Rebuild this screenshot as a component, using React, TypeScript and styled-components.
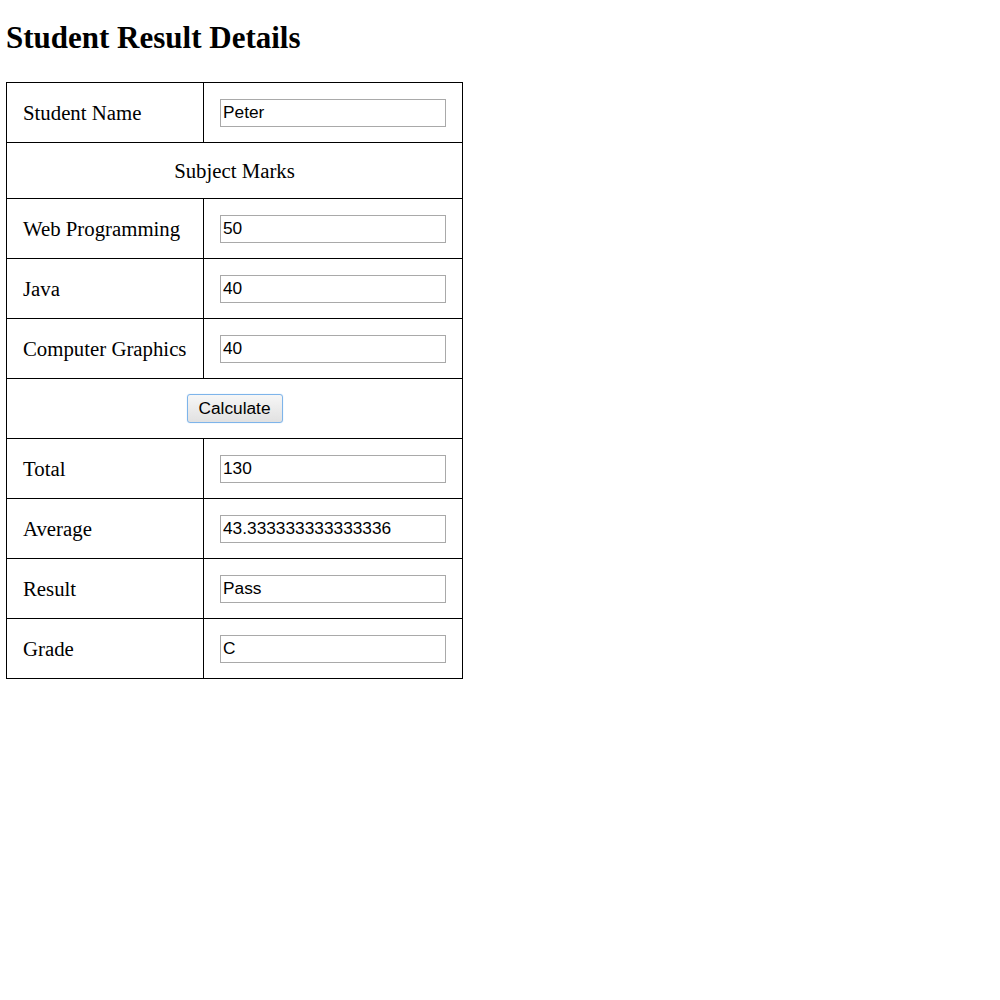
import React from "react";
import styled, { createGlobalStyle } from "styled-components";

const Global = createGlobalStyle`
  html, body { margin: 0; padding: 0; background: #fff; }
  body { font-family: "Liberation Serif", "Times New Roman", serif; color: #000; }
`;

const Page = styled.div`
  padding: 20px 0 0 6px;
`;

const Title = styled.h2`
  margin: 0 0 26px 0;
  font-size: 31px;
  line-height: 36px;
  font-weight: bold;
`;

const Table = styled.table`
  border-collapse: collapse;
  table-layout: fixed;
  width: 456px;
  border: 1px solid #000;
`;

const Cell = styled.td<{ $h?: number; $center?: boolean }>`
  border: 1px solid #000;
  height: ${(p) => p.$h ?? 60}px;
  padding: 0 0 0 16px;
  font-size: 20.8px;
  text-align: ${(p) => (p.$center ? "center" : "left")};
  vertical-align: middle;
  box-sizing: border-box;
  ${(p) => p.$center && "padding: 0;"}
`;

const Field = styled.input`
  box-sizing: border-box;
  width: 226px;
  height: 28px;
  margin: 0;
  padding: 0 2px;
  border: 1px solid #a9a9a9;
  font-family: "Liberation Sans", Arial, sans-serif;
  font-size: 17.3px;
  color: #000;
  background: #fff;
  display: block;
  outline: none;
`;

const Button = styled.button`
  box-sizing: border-box;
  width: 96px;
  height: 29px;
  margin: 0;
  padding: 0;
  border: 1px solid #7eb4ea;
  border-radius: 3px;
  background: linear-gradient(#f6f6f6, #e1e1e1);
  font-family: "Liberation Sans", Arial, sans-serif;
  font-size: 17.3px;
  color: #000;
  box-shadow: 0 0 1px #9cc6f0;
`;

const rows1 = [{ label: "Student Name", value: "Peter" }];
const marks = [
  { label: "Web Programming", value: "50" },
  { label: "Java", value: "40" },
  { label: "Computer Graphics", value: "40" },
];
const results = [
  { label: "Total", value: "130" },
  { label: "Average", value: "43.333333333333336" },
  { label: "Result", value: "Pass" },
  { label: "Grade", value: "C" },
];

const Row = ({ label, value }: { label: string; value: string }) => (
  <tr>
    <Cell>{label}</Cell>
    <Cell>
      <Field type="text" defaultValue={value} readOnly />
    </Cell>
  </tr>
);

export default function App() {
  return (
    <Page>
      <Global />
      <Title>Student Result Details</Title>
      <Table>
        <colgroup>
          <col style={{ width: 197 }} />
          <col style={{ width: 259 }} />
        </colgroup>
        <tbody>
          {rows1.map((r) => (
            <Row key={r.label} {...r} />
          ))}
          <tr>
            <Cell colSpan={2} $center $h={56}>
              Subject Marks
            </Cell>
          </tr>
          {marks.map((r) => (
            <Row key={r.label} {...r} />
          ))}
          <tr>
            <Cell colSpan={2} $center>
              <Button>Calculate</Button>
            </Cell>
          </tr>
          {results.map((r) => (
            <Row key={r.label} {...r} />
          ))}
        </tbody>
      </Table>
    </Page>
  );
}
